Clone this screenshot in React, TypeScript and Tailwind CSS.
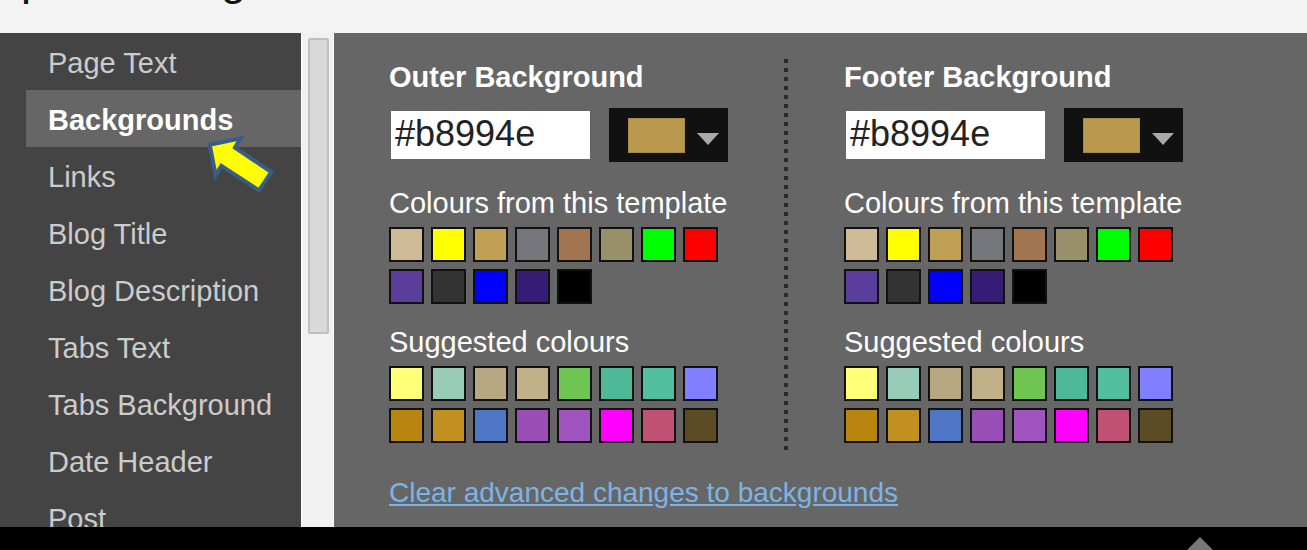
import { useState } from 'react'
import clsx from 'clsx'

const sections = [
  'Page Text',
  'Backgrounds',
  'Links',
  'Blog Title',
  'Blog Description',
  'Tabs Text',
  'Tabs Background',
  'Date Header',
  'Post',
]

const templateColours = [
  '#cfbb97', '#ffff00', '#c0a055', '#75777c', '#a07550', '#98906a', '#00ff00', '#ff0000',
  '#5b3d9c', '#333333', '#0000ff', '#351c75', '#000000',
]

const suggestedColours = [
  '#ffff78', '#99ccb8', '#b8a882', '#c2b088', '#70c452', '#4eb998', '#52c09e', '#7f7fff',
  '#b8860f', '#c09020', '#4e76c4', '#994eb8', '#a054c0', '#ff00ff', '#c05074', '#5c4c26',
]

type SwatchesProps = {
  title: string
  colours: string[]
  onPick: (colour: string) => void
}
function Swatches({ title, colours, onPick }: SwatchesProps) {
  return (
    <section>
      <h3 className="text-[29px] leading-9 whitespace-nowrap">{title}</h3>
      <div className="grid grid-cols-[repeat(8,35px)] gap-[7px] mt-[6px]">
        {colours.map((colour) => (
          <button
            key={colour}
            aria-label={colour}
            onClick={() => onPick(colour)}
            className="h-[35px] border-2 border-[#111] cursor-pointer"
            style={{ backgroundColor: colour }}
          />
        ))}
      </div>
    </section>
  )
}

type PickerProps = {
  id: string
  label: string
}
function ColourPicker({ id, label }: PickerProps) {
  const [colour, setColour] = useState('#b8994e')

  return (
    <div className="w-[339px] pb-[7px]">
      <label htmlFor={id} className="block text-[29px] leading-9 font-bold whitespace-nowrap">
        {label}
      </label>
      <div className="flex items-center justify-between mt-[13px] pl-[2px]">
        <input
          id={id}
          type="text"
          value={colour}
          onChange={(e) => setColour(e.target.value)}
          className="w-[199px] h-12 pl-1 pb-[3px] bg-white text-[#222] text-[36px] outline-none"
        />
        <button
          aria-label={`Choose ${label}`}
          className="flex items-center gap-3 h-[54px] w-[119px] pl-[19px] bg-[#111] cursor-pointer"
        >
          <span
            className="block w-[57px] h-[35px] border border-[#a58a48]"
            style={{ backgroundColor: colour }}
          />
          <svg width="22" height="12" viewBox="0 0 22 12" className="mt-2" fill="#aaa">
            <path d="M0 0h22L11 12z" />
          </svg>
        </button>
      </div>
      <div className="flex flex-col gap-5 mt-[23px]">
        <Swatches title="Colours from this template" colours={templateColours} onPick={setColour} />
        <Swatches title="Suggested colours" colours={suggestedColours} onPick={setColour} />
      </div>
    </div>
  )
}

export default function App() {
  const [active, setActive] = useState('Backgrounds')

  return (
    <div className="flex flex-col h-screen overflow-hidden bg-black font-['Liberation_Sans',Arial,sans-serif]">
      <header className="h-[33px] shrink-0 overflow-hidden bg-[#f3f3f3]">
        <h1 className="-mt-11 -ml-16 text-[45px] leading-12 text-[#111] whitespace-nowrap">
          Template Designer
        </h1>
      </header>

      <main className="flex flex-1 min-h-0 overflow-hidden">
        <nav className="relative w-[301px] shrink-0 overflow-hidden bg-[#444] pl-[26px]">
          <ul>
            {sections.map((name) => (
              <li key={name}>
                <button
                  onClick={() => setActive(name)}
                  className={clsx(
                    'block w-full h-[57px] pl-[22px] pt-1 text-left text-[29px] whitespace-nowrap cursor-pointer',
                    name === active ? 'bg-[#666] font-bold text-white' : 'text-[#ccc]'
                  )}
                >
                  {name}
                </button>
              </li>
            ))}
          </ul>
          {/* pointer over the selected section */}
          <svg
            width="70"
            height="62"
            viewBox="0 0 70 62"
            className="absolute left-[205px] top-[100px] pointer-events-none"
          >
            <path
              d="M4.7 11.7 35.5 5.3 30 14.7 66.3 39 54 57.3 16.3 32.7 10.7 42.3z"
              fill="#ffff00"
              stroke="#385d8a"
              strokeWidth="4"
            />
          </svg>
        </nav>

        <div className="w-[33px] shrink-0 border-x border-white bg-[#f1f1f1] pl-[6px] pr-1 pt-[5px]">
          <div className="h-[296px] rounded-xs border-2 border-[#bfbfbf] bg-[#d9d9d9]" />
        </div>

        <div className="flex-1 min-w-0 overflow-hidden bg-[#666] pl-[55px] pt-[26px] text-white">
          <div className="flex gap-14">
            <ColourPicker id="outer-background" label="Outer Background" />
            <div className="w-1 bg-[repeating-linear-gradient(#2a2a2a_0_4px,transparent_4px_9px)]" />
            <ColourPicker id="footer-background" label="Footer Background" />
          </div>
          <a
            href="#clear"
            className="inline-block mt-[25px] text-[28px] leading-9 text-[#7db4e6] underline whitespace-nowrap"
          >
            Clear advanced changes to backgrounds
          </a>
        </div>
      </main>

      <footer className="flex justify-end items-end h-[23px] shrink-0 bg-black pr-[94px]">
        <svg width="26" height="13" viewBox="0 0 26 13" fill="#777">
          <path d="M13 0l13 13H0z" />
        </svg>
      </footer>
    </div>
  )
}
